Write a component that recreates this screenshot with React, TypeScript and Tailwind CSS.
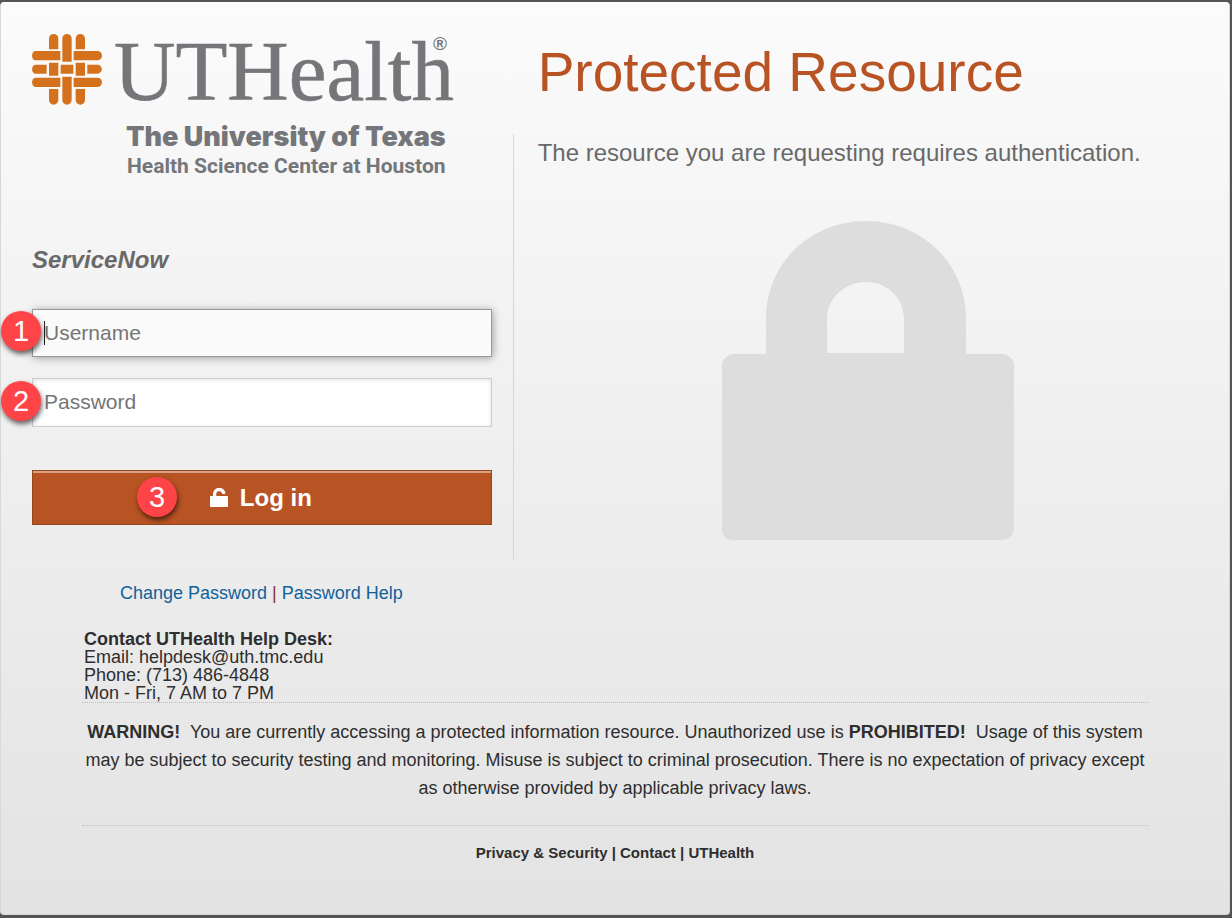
import type { ReactNode } from 'react';

function Logo() {
  return (
    <svg className="w-[428px] h-[144px] overflow-visible" viewBox="0 0 428 144" role="img" aria-label="UTHealth">
      <g transform="scale(0.3333)" fill="#d4711d">
        <path d="M51 46V14a14 14 0 0 1 28 0v32zM131 46V14a14 14 0 0 1 28 0v32z" />
        <path d="M51 165v33a14 14 0 0 0 28 0v-33zM131 165v33a14 14 0 0 0 28 0v-33z" />
        <path d="M91 83V14a14 14 0 0 1 28 0v69zM91 128v70a14 14 0 0 0 28 0v-70z" />
        <path d="M85 51H8q-8 4-8 14t8 14h77zM125 51h71a14 14 0 0 1 0 28h-71z" />
        <path d="M85 131H8q-8 4-8 14t8 14h77zM125 131h71a14 14 0 0 1 0 28h-71z" />
        <path d="M44 92H8q-8 4-8 13.5t8 13.5h36zM166 92h30a13.5 13.5 0 0 1 0 27h-30z" />
        <path d="M51 86h28v39H51zM131 86h28v39h-28zM86 92h38v27H86z" />
      </g>
      <g fill="#75767a">
        <text x="82" y="66" fontFamily="'Liberation Serif', serif" fontSize="85" stroke="#75767a" strokeWidth="0.6">UTHealth</text>
        <text x="401" y="16" fontFamily="'Liberation Sans', sans-serif" fontSize="19" fontWeight="700">®</text>
        <text x="94" y="112" fontFamily="Inter, sans-serif" fontSize="27" fontWeight="900">The University of Texas</text>
        <text x="95" y="139" fontFamily="Roboto, sans-serif" fontSize="21" fontWeight="700">Health Science Center at Houston</text>
      </g>
    </svg>
  );
}

function UnlockIcon() {
  return (
    <svg className="w-[18px] h-[19px]" viewBox="0 0 18 19" aria-hidden="true">
      <path d="M4.6 9V6.4a4.6 4.6 0 0 1 9.2-0.6" fill="none" stroke="#fff" strokeWidth="3.4" />
      <rect x="0" y="8" width="18" height="11" rx="0.8" fill="#fff" />
    </svg>
  );
}

function LockPicture() {
  return (
    <svg className="w-[292px] h-[319px]" viewBox="0 0 292 319" aria-hidden="true">
      <path
        fill="#ddd"
        fillRule="evenodd"
        d="M44 133V97C44 43 88 0 144 0s100 43 100 97v36h36a12 12 0 0 1 12 12v162a12 12 0 0 1-12 12H10a10 10 0 0 1-10-10V145a12 12 0 0 1 12-12zM105 132h77V98c0-21-17-37-38-37s-39 16-39 37z"
      />
    </svg>
  );
}

function Step({ className, children }: { className: string; children: ReactNode }) {
  return (
    <span
      className={`absolute flex h-10 w-10 items-center justify-center rounded-full bg-[#ff4447] text-[29px] leading-none text-white shadow-[1px_3px_5px_rgba(0,0,0,0.6)] ${className}`}
    >
      {children}
    </span>
  );
}

export default function App() {
  return (
    <div className="flex min-h-screen bg-[#555] pt-[2px] pr-[2px] pb-[3px] font-['Liberation_Sans',Arial,sans-serif] text-[#2e2e2e]">
      <div className="flex-1 rounded-[4px] border border-[#d8d8d8] border-t-white bg-linear-to-b from-[#fbfbfb] to-[#e3e3e3]">
        <main className="grid grid-cols-[5fr_7fr]">
          <section className="pt-[31px] pr-[21px] pl-[31px]">
            <Logo />

            <form onSubmit={(e) => e.preventDefault()}>
              <h2 className="mt-[66px] text-2xl font-bold text-[#696969] italic">ServiceNow</h2>

              <div className="relative mt-[33px]">
                <input
                  type="text"
                  aria-label="Username"
                  placeholder="Username"
                  className="block h-12 w-full border border-[#999] bg-[#fafafa] px-[11px] text-[21px] shadow-[1px_1px_8px_rgba(0,0,0,0.35)] outline-none placeholder:text-[#757575]"
                />
                <span className="absolute top-3 left-3 h-6 w-px bg-[#222]" />
                <Step className="top-[2px] -left-[31px]">1</Step>
              </div>

              <div className="relative mt-[21px]">
                <input
                  type="password"
                  aria-label="Password"
                  placeholder="Password"
                  className="block h-[49px] w-full border border-[#ccc] bg-white px-[11px] pb-[2px] text-[21px] shadow-[inset_0_1px_4px_rgba(0,0,0,0.12)] outline-none placeholder:text-[#757575]"
                />
                <Step className="top-[3px] -left-[31px]">2</Step>
              </div>

              <div className="relative mt-[43px]">
                <button
                  type="submit"
                  className="flex h-[55px] w-full items-center justify-center gap-3 border border-[#94481d] bg-[#b85324] pr-[2px] text-2xl font-bold text-white shadow-[inset_0_2px_0_#d9a086]"
                >
                  <UnlockIcon />
                  Log in
                </button>
                <Step className="top-[7px] left-[105px]">3</Step>
              </div>
            </form>
          </section>

          <section>
            <h1 className="flex h-[131px] items-center pt-2 pl-[25px] text-[55px] text-[#b85324]">Protected Resource</h1>
            <div className="h-[425px] border-l border-[#d6d6d6] pl-6">
              <p className="pt-[3px] text-2xl text-[#696969]">The resource you are requesting requires authentication.</p>
              <div className="mt-[52px] flex justify-center pr-[30px]">
                <LockPicture />
              </div>
            </div>
          </section>
        </main>

        <footer className="mx-[81px] text-lg">
          <nav className="mt-5 pl-[38px] text-[#8c2f2f]">
            <a href="#change" className="text-[#0f6299]">Change Password</a>
            {' | '}
            <a href="#help" className="text-[#0f6299]">Password Help</a>
          </nav>

          <address className="mt-[23px] pl-[2px] leading-[18px] not-italic">
            <strong>Contact UTHealth Help Desk:</strong>
            <br />
            Email: helpdesk@uth.tmc.edu
            <br />
            Phone: (713) 486-4848
            <br />
            Mon - Fri, 7 AM to 7 PM
          </address>

          <p className="border-y border-dotted border-[#bbb] pt-[15px] pb-[23px] text-center leading-7">
            <strong>WARNING!</strong>&nbsp; You are currently accessing a protected information resource. Unauthorized
            use is <strong>PROHIBITED!</strong>&nbsp; Usage of this system may be subject to security testing and
            monitoring. Misuse is subject to criminal prosecution. There is no expectation of privacy except as
            otherwise provided by applicable privacy laws.
          </p>

          <p className="pt-[15px] pb-12 text-center text-[15px] font-bold">
            <a href="#privacy">Privacy &amp; Security</a> | <a href="#contact">Contact</a> |{' '}
            <a href="#uthealth">UTHealth</a>
          </p>
        </footer>
      </div>
    </div>
  );
}
